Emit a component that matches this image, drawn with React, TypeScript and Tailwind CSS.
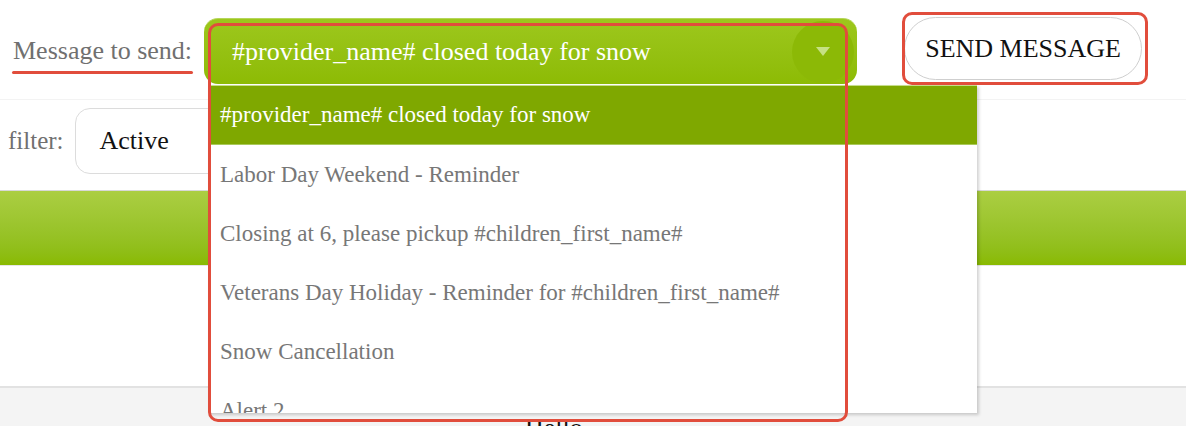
import React from "react";

const items = [
  "Labor Day Weekend - Reminder",
  "Closing at 6, please pickup #children_first_name#",
  "Veterans Day Holiday - Reminder for #children_first_name#",
  "Snow Cancellation",
  "Alert 2",
];

export default function App() {
  return (
    <div className="relative w-[1186px] h-[426px] overflow-hidden bg-white font-['Liberation_Serif','Times_New_Roman',serif] flex flex-col">
      {/* Row 1 */}
      <div className="flex items-start h-[100px] shrink-0 pt-[18px] border-b border-[#f3f3f3]">
        <div className="ml-[13px] h-[66px] flex items-center text-[26px] leading-[30px] text-[#707070] whitespace-nowrap">
          Message to send:
        </div>
        <div className="ml-[12px] w-[653px] h-[66px] rounded-[14px] bg-gradient-to-b from-[#9dc71c] to-[#8dbb04] border-t border-[#b5d65a] flex items-center justify-between">
          <span className="ml-[28px] text-[26px] leading-[30px] text-white whitespace-nowrap">
            #provider_name# closed today for snow
          </span>
          <div className="mr-[3px] w-[62px] h-[62px] rounded-full bg-[#8cb906] flex items-center justify-center">
            <svg width="14" height="9" viewBox="0 0 14 9">
              <polygon points="0,0 14,0 7,9" fill="#c6e183" />
            </svg>
          </div>
        </div>
        <button className="ml-[47px] mt-[-1px] w-[238px] h-[63px] rounded-full border border-[#cfcfcf] bg-white text-[26px] leading-[30px] text-[#111] whitespace-nowrap">
          SEND MESSAGE
        </button>
      </div>

      {/* Row 2 */}
      <div className="flex items-start h-[90px] shrink-0 pt-[8px]">
        <div className="ml-[8px] h-[66px] flex items-center text-[25px] leading-[30px] text-[#707070]">
          filter:
        </div>
        <div className="ml-[11px] w-[320px] h-[66px] rounded-[15px] border border-[#dcdcdc] flex items-center pl-[24px] text-[26px] leading-[30px] text-[#111]">
          Active
        </div>
      </div>

      {/* Green bar */}
      <div className="h-[76px] shrink-0 border-t border-[#d8d8d8] border-b border-b-[#e6e6e6] bg-gradient-to-b from-[#abce42] to-[#89ba00]" />

      {/* White area */}
      <div className="h-[120px] shrink-0 bg-white" />

      {/* Gray area */}
      <div className="flex-1 border-t-2 border-[#e2e2e2] bg-[#f4f4f4] pl-[525px] pt-[25px] text-[26px] leading-[30px] text-[#111]">
        Hello
      </div>

      {/* Dropdown list */}
      <div className="absolute left-[208px] top-[85px] w-[769px] h-[328px] bg-white border-l border-[#d6d6d6] shadow-[2px_2px_3px_rgba(0,0,0,0.18)] overflow-hidden">
        <div className="h-[60px] flex items-center pl-[11px] bg-[#7fa800] border-t border-[#c6dd8a] border-b border-b-[#a9c95a] text-[23px] leading-[28px] text-white whitespace-nowrap">
          #provider_name# closed today for snow
        </div>
        {items.map((t) => (
          <div
            key={t}
            className="h-[59px] shrink-0 flex items-center pl-[11px] text-[23px] leading-[28px] text-[#777] whitespace-nowrap"
          >
            {t}
          </div>
        ))}
      </div>

      {/* Red annotations */}
      <div className="absolute left-[12px] top-[71px] w-[181px] h-[3px] rounded-full bg-[#e14d3c]" />
      <div className="absolute left-[208px] top-[23px] w-[640px] h-[399px] border-[3px] border-[#e14d3c] rounded-[10px]" />
      <div className="absolute left-[902px] top-[12px] w-[246px] h-[73px] border-[3px] border-[#e14d3c] rounded-[10px]" />
    </div>
  );
}
